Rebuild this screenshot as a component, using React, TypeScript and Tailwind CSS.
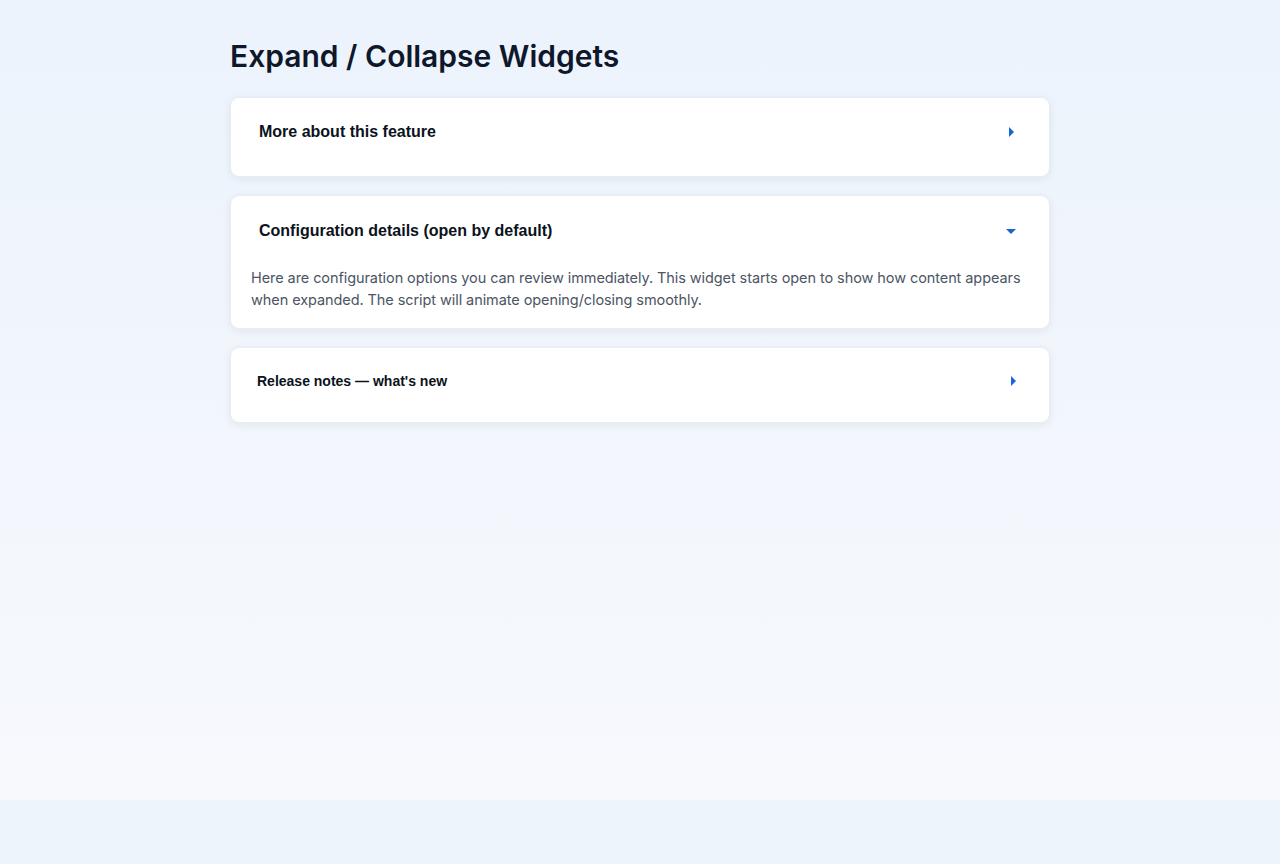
import { useState } from "react";

type Widget = {
  id: string;
  title: string;
  body?: string;
  small?: boolean;
};

const widgets: Widget[] = [
  { id: "more", title: "More about this feature" },
  {
    id: "config",
    title: "Configuration details (open by default)",
    body: "Here are configuration options you can review immediately. This widget starts open to show how content appears when expanded. The script will animate opening/closing smoothly.",
  },
  { id: "release", title: "Release notes — what's new", small: true },
];

function Caret({ open }: { open: boolean }) {
  return (
    <span className="w-[10px] h-[10px] flex items-center justify-center">
      <svg
        className={open ? "w-[10px] h-[5px]" : "w-[5px] h-[10px]"}
        viewBox={open ? "0 0 10 5" : "0 0 5 10"}
        fill="#1467d6"
      >
        {open ? <path d="M0 0h10L5 5z" /> : <path d="M0 0v10l5-5z" />}
      </svg>
    </span>
  );
}

export default function App() {
  const [open, setOpen] = useState<Record<string, boolean>>({ config: true });

  return (
    <div className="min-h-[864px] bg-[#edf4fc] font-['Inter',sans-serif]">
      <div className="h-[800px] bg-gradient-to-b from-[#ecf3fc] to-[#f7f9fd]">
        <div className="w-[820px] mx-auto pt-[34px]">
          <h1 className="text-[30px] leading-[44px] font-semibold text-[#0f172a]">
            Expand / Collapse Widgets
          </h1>
          <div className="mt-[19px] flex flex-col gap-[18px]">
            {widgets.map((w) => {
              const isOpen = !!open[w.id];
              return (
                <div
                  key={w.id}
                  className={`bg-white rounded-[9px] border border-[#e8edf4] shadow-[0_2px_8px_rgba(15,23,42,0.07)] px-5 ${
                    w.small ? "pt-[13px] pb-[21px]" : isOpen ? "pt-[15px] pb-[17px]" : "pt-[14px] pb-6"
                  }`}
                >
                  <button
                    type="button"
                    onClick={() => setOpen((o) => ({ ...o, [w.id]: !o[w.id] }))}
                    className={`w-full h-10 flex items-center justify-between font-['Liberation_Sans',Arial,sans-serif] font-bold text-[#0b1220] text-left ${
                      w.small ? "text-[14px] pl-[6px] pr-[11px]" : "text-[16px] pl-2 pr-[13px]"
                    }`}
                  >
                    <span>{w.title}</span>
                    <Caret open={isOpen} />
                  </button>
                  {isOpen && w.body && (
                    <p className="mt-4 text-[14.5px] leading-[22px] tracking-[-0.08px] text-[#4b5563]">
                      {w.body}
                    </p>
                  )}
                </div>
              );
            })}
          </div>
        </div>
      </div>
    </div>
  );
}
